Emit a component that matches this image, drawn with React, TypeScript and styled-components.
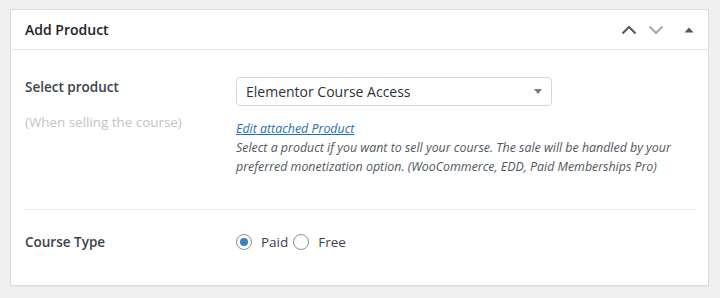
import React from 'react';
import styled, { createGlobalStyle } from 'styled-components';

const GlobalStyle = createGlobalStyle`
  html, body {
    margin: 0;
    padding: 0;
    background: #f0f0f1;
    font-family: "Open Sans", "Liberation Sans", sans-serif;
    color: #3c434a;
  }
`;

const Page = styled.div`
  padding: 9px 11px 12px 10px;
  height: 298px;
  box-sizing: border-box;
`;

const Panel = styled.div`
  background: #fff;
  border: 1px solid #dcdcde;
  box-shadow: 0 1px 1px rgba(0, 0, 0, 0.04);
  height: 100%;
  box-sizing: border-box;
`;

const Header = styled.div`
  display: flex;
  align-items: center;
  height: 39px;
  padding: 0 12px 0 14px;
  border-bottom: 1px solid #e6e6e8;
`;

const Title = styled.h2`
  flex: 1;
  margin: 0;
  font-size: 14px;
  font-weight: 600;
  color: #1d2327;
`;

const HandleButton = styled.button<{ $muted?: boolean; $narrow?: boolean }>`
  display: flex;
  align-items: center;
  justify-content: center;
  width: ${(p) => (p.$narrow ? '14px' : '27px')};
  margin-left: ${(p) => (p.$narrow ? '13px' : '0')};
  height: 36px;
  padding: 0;
  border: 0;
  background: none;
  color: ${(p) => (p.$muted ? '#a7aaad' : '#50575e')};
`;

const Body = styled.div`
  padding: 0 13px 0 14px;
`;

const Row = styled.div<{ $last?: boolean }>`
  display: grid;
  grid-template-columns: 211px 1fr;
  padding: ${(p) => (p.$last ? '22px 0 0' : '27px 0 33px')};
  border-bottom: ${(p) => (p.$last ? 'none' : '1px solid #ececee')};
`;

const Label = styled.div`
  font-size: 13.5px;
  font-weight: 600;
  color: #3c434a;
  line-height: 20px;
`;

const Hint = styled.div`
  margin-top: 16px;
  font-size: 13.4px;
  color: #c3c4c7;
`;

const SelectBox = styled.div`
  display: flex;
  align-items: center;
  justify-content: space-between;
  width: 316px;
  height: 29px;
  box-sizing: border-box;
  border: 1px solid #d7d7da;
  border-radius: 4px;
  padding: 0 9px;
  font-size: 14px;
  color: #2c3338;
`;

const Caret = styled.span`
  width: 0;
  height: 0;
  border-left: 4px solid transparent;
  border-right: 4px solid transparent;
  border-top: 5px solid #787c82;
`;

const EditLink = styled.a`
  display: inline-block;
  margin-top: 14px;
  font-size: 12.4px;
  line-height: 18px;
  font-style: italic;
  color: #2271b1;
  text-decoration: underline;
`;

const Description = styled.p`
  margin: 0;
  font-size: 12.4px;
  font-style: italic;
  line-height: 19px;
  color: #50575e;
`;

const RadioGroup = styled.div`
  display: flex;
  align-items: center;
  font-size: 13.5px;
  color: #3c434a;
`;

const RadioOption = styled.label`
  display: flex;
  align-items: center;
  gap: 9px;
  margin-right: 5px;
`;

const RadioCircle = styled.span<{ $checked?: boolean }>`
  width: 16px;
  height: 16px;
  box-sizing: border-box;
  border-radius: 50%;
  border: 1px solid #8c8f94;
  display: flex;
  align-items: center;
  justify-content: center;
  &::after {
    content: '';
    width: 8px;
    height: 8px;
    border-radius: 50%;
    background: ${(p) => (p.$checked ? '#3582c4' : 'transparent')};
  }
`;

const Chevron = ({ up }: { up?: boolean }) => (
  <svg width="16" height="10" viewBox="0 0 16 10" fill="none">
    <path
      d={up ? 'M1.5 8.5 L8 2 L14.5 8.5' : 'M1.5 1.5 L8 8 L14.5 1.5'}
      stroke="currentColor"
      strokeWidth="2"
    />
  </svg>
);

export default function App() {
  return (
    <>
      <GlobalStyle />
      <Page>
        <Panel>
          <Header>
            <Title>Add Product</Title>
            <HandleButton aria-label="Move up">
              <Chevron up />
            </HandleButton>
            <HandleButton $muted aria-label="Move down">
              <Chevron />
            </HandleButton>
            <HandleButton $narrow aria-label="Toggle panel">
              <svg width="10" height="6" viewBox="0 0 10 6">
                <path d="M0.5 5.5 L5 0.5 L9.5 5.5 Z" fill="#50575e" />
              </svg>
            </HandleButton>
          </Header>
          <Body>
            <Row>
              <div>
                <Label>Select product</Label>
                <Hint>(When selling the course)</Hint>
              </div>
              <div>
                <SelectBox>
                  Elementor Course Access
                  <Caret />
                </SelectBox>
                <EditLink href="#">Edit attached Product</EditLink>
                <Description>
                  Select a product if you want to sell your course. The sale will be handled by your
                  <br />
                  preferred monetization option. (WooCommerce, EDD, Paid Memberships Pro)
                </Description>
              </div>
            </Row>
            <Row $last>
              <Label>Course Type</Label>
              <RadioGroup>
                <RadioOption>
                  <RadioCircle $checked />
                  Paid
                </RadioOption>
                <RadioOption>
                  <RadioCircle />
                  Free
                </RadioOption>
              </RadioGroup>
            </Row>
          </Body>
        </Panel>
      </Page>
    </>
  );
}
